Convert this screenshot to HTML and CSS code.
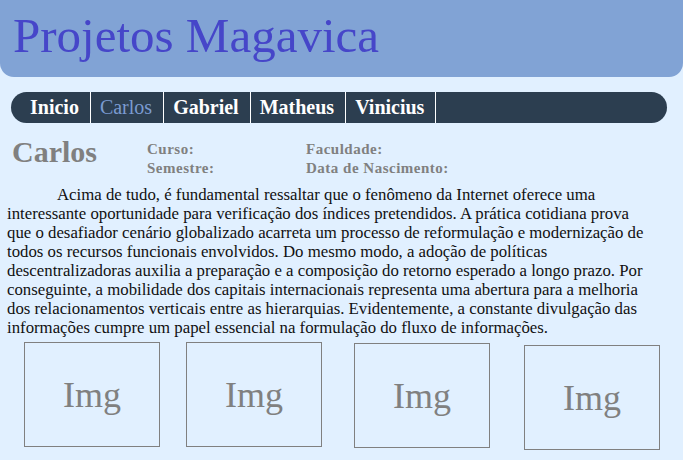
FILE: index.html
```html
<!DOCTYPE html>
<html lang="pt-BR">
<head>
<meta charset="utf-8">
<title>Projetos Magavica</title>
<link rel="stylesheet" href="styles.css">
</head>
<body>
<header class="site-header">
  <h1 class="site-title">Projetos Magavica</h1>
</header>
<nav class="menu">
  <a class="menu-item" href="#">Inicio</a>
  <a class="menu-item active" href="#">Carlos</a>
  <a class="menu-item" href="#">Gabriel</a>
  <a class="menu-item" href="#">Matheus</a>
  <a class="menu-item" href="#">Vinicius</a>
</nav>
<section class="profile">
  <h2 class="profile-name">Carlos</h2>
  <div class="profile-info">
    <span class="info-label">Curso:</span>
    <span class="info-label">Faculdade:</span>
    <span class="info-label">Semestre:</span>
    <span class="info-label">Data de Nascimento:</span>
  </div>
</section>
<p class="bio">Acima de tudo, é fundamental ressaltar que o fenômeno da Internet oferece uma<br>interessante oportunidade para verificação dos índices pretendidos. A prática cotidiana prova<br>que o desafiador cenário globalizado acarreta um processo de reformulação e modernização de<br>todos os recursos funcionais envolvidos. Do mesmo modo, a adoção de políticas<br>descentralizadoras auxilia a preparação e a composição do retorno esperado a longo prazo. Por<br>conseguinte, a mobilidade dos capitais internacionais representa uma abertura para a melhoria<br>dos relacionamentos verticais entre as hierarquias. Evidentemente, a constante divulgação das<br>informações cumpre um papel essencial na formulação do fluxo de informações.</p>
<div class="gallery">
  <div class="img-box">Img</div>
  <div class="img-box">Img</div>
  <div class="img-box">Img</div>
  <div class="img-box">Img</div>
</div>
</body>
</html>
```
FILE: styles.css
```css
html, body {
  margin: 0;
  padding: 0;
}
body {
  background: #e1f0ff;
  font-family: "Liberation Serif", "Times New Roman", serif;
  color: #111;
}
.site-header {
  background: #81a3d5;
  height: 77px;
  border-radius: 0 0 14px 14px;
  padding-left: 13px;
  box-sizing: border-box;
}
.site-title {
  margin: 0;
  font-size: 49px;
  font-weight: normal;
  color: #4646c9;
  line-height: 77px;
  position: relative;
  top: -3px;
}
.menu {
  display: flex;
  margin: 15px 16px 0 11px;
  height: 31px;
  border-radius: 16px;
  background: #2c3e50;
  padding-left: 10px;
}
.menu-item {
  display: flex;
  align-items: center;
  padding: 0 11px 0 9px;
  border-right: 1px solid #ffffff;
  color: #ffffff;
  text-decoration: none;
  font-size: 20px;
  font-weight: bold;
}
.menu-item.active {
  color: #7b9bd0;
  font-weight: normal;
}
.profile {
  display: flex;
  align-items: flex-start;
  padding: 13px 0 0 12px;
}
.profile-name {
  margin: 0;
  width: 135px;
  font-size: 30px;
  color: #808080;
  line-height: 32px;
}
.profile-info {
  display: grid;
  grid-template-columns: 159px auto;
  row-gap: 1px;
  padding-top: 4px;
}
.info-label {
  font-size: 15px;
  font-weight: bold;
  letter-spacing: 0.5px;
  color: #808080;
  line-height: 18px;
}
.bio {
  margin: 8px 0 0 7px;
  font-size: 16.8px;
  line-height: 19px;
  text-indent: 50px;
  white-space: nowrap;
}
.gallery {
  display: flex;
  align-items: flex-start;
  padding: 5px 0 0 24px;
}
.img-box {
  width: 134px;
  height: 103px;
  border: 1px solid #808080;
  display: flex;
  align-items: center;
  justify-content: center;
  font-size: 36px;
  color: #808080;
}
.img-box:nth-child(2) { margin-left: 26px; }
.img-box:nth-child(3) { margin-left: 32px; margin-top: 1px; }
.img-box:nth-child(4) { margin-left: 34px; margin-top: 3px; }
```
